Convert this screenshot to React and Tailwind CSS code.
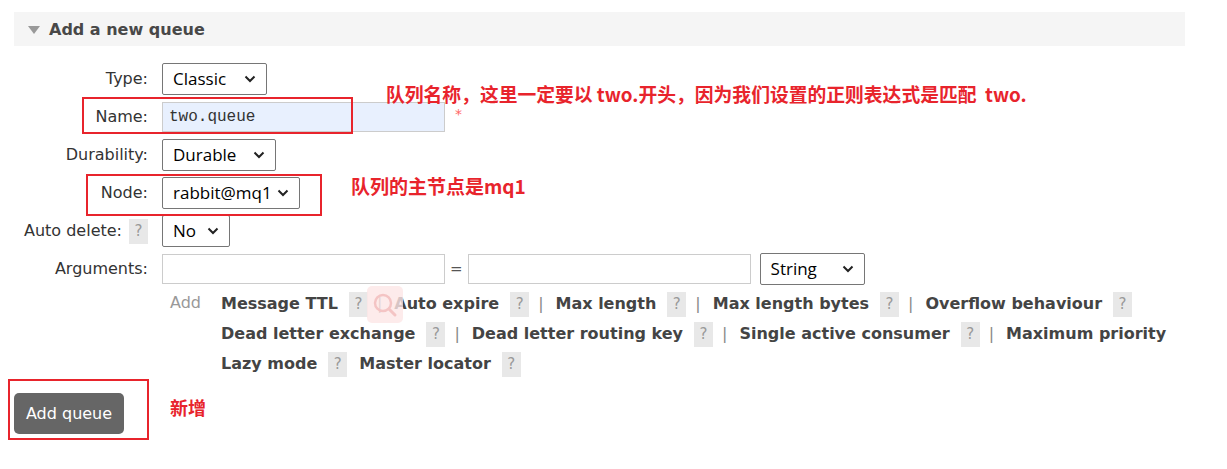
import { useState } from "react";

const Help = ({ className = "" }) => (
  <span
    className={
      "inline-flex items-center justify-center w-[19px] h-[25px] bg-[#e8e8e8] text-[#999] text-[15px] font-normal " +
      className
    }
  >
    ?
  </span>
);

const Chevron = () => (
  <svg width="12" height="8" viewBox="0 0 12 8" className="ml-auto">
    <path d="M1.5 1.5 L6 6 L10.5 1.5" fill="none" stroke="#222" strokeWidth="2" />
  </svg>
);

const Select = ({ value, width }) => (
  <div
    className={
      "flex items-center h-[32px] px-[10px] border border-[#767676] rounded-[2px] bg-white text-[17px] text-black font-['Open_Sans',sans-serif] " +
      width
    }
  >
    <span>{value}</span>
    <Chevron />
  </div>
);

const Row = ({ label, help, children }) => (
  <div className="flex items-center h-[38px]">
    <div className="w-[148px] flex items-center justify-end gap-[7px] text-[16px] text-[#333]">
      <span>{label}</span>
      {help && <Help />}
    </div>
    <div className="ml-[14px] flex items-center">{children}</div>
  </div>
);

const Arg = ({ name, last, help = true }) => (
  <span className="inline-flex items-center">
    <span className="font-bold text-[#444]">{name}</span>
    {help && <Help className="ml-[11px]" />}
    {!last && <span className="ml-[9px] mr-[12px] text-[#888] font-normal">|</span>}
  </span>
);

export default function App() {
  const [name] = useState("two.queue");

  return (
    <div className="relative w-[1227px] h-[469px] bg-white font-['DejaVu_Sans',Verdana,sans-serif] overflow-hidden">
      <div className="pt-[12px] pl-[14px]">
        {/* section header */}
        <div className="flex items-center w-[1171px] h-[34px] bg-[#f5f5f5] pl-[14px] pt-[2px]">
          <svg width="12" height="8" viewBox="0 0 12 8">
            <path d="M0 0 L12 0 L6 8 Z" fill="#999" />
          </svg>
          <span className="ml-[9px] text-[16px] font-bold text-[#484848]">Add a new queue</span>
        </div>

        <div className="mt-[14px] -ml-[14px] flex flex-col">
          <Row label="Type:">
            <Select value="Classic" width="w-[105px]" />
          </Row>
          <Row label="Name:">
            <div className="w-[283px] h-[30px] bg-[#e8f0fe] border border-[#ccc] flex items-center px-[6px] font-['Liberation_Mono',monospace] text-[16px] text-[#333]">
              {name}
            </div>
            <span className="ml-[10px] text-[#f66] text-[14px] self-start mt-[2px]">*</span>
          </Row>
          <Row label="Durability:">
            <Select value="Durable" width="w-[114px]" />
          </Row>
          <Row label="Node:">
            <Select value="rabbit@mq1" width="w-[138px]" />
          </Row>
          <Row label="Auto delete:" help>
            <Select value="No" width="w-[68px]" />
          </Row>
          <Row label="Arguments:">
            <div className="w-[283px] h-[30px] border border-[#ccc] bg-white" />
            <span className="mx-[5px] text-[#555] text-[15px]">=</span>
            <div className="w-[283px] h-[30px] border border-[#ccc] bg-white" />
            <div className="ml-[9px]">
              <Select value="String" width="w-[105px]" />
            </div>
          </Row>
        </div>

        {/* argument shortcuts */}
        <div className="flex mt-[1px] ml-[156px]">
          <span className="text-[16px] text-[#999] w-[51px] leading-[28px]">Add</span>
          <div className="flex flex-col text-[16px]">
            <div className="flex items-center h-[30px]">
              <Arg name="Message TTL" />
              <Arg name="Auto expire" />
              <Arg name="Max length" />
              <Arg name="Max length bytes" />
              <Arg name="Overflow behaviour" last />
            </div>
            <div className="flex items-center h-[30px]">
              <Arg name="Dead letter exchange" />
              <Arg name="Dead letter routing key" />
              <Arg name="Single active consumer" />
              <Arg name="Maximum priority" last help={false} />
            </div>
            <div className="flex items-center h-[30px] gap-[12px]">
              <span className="inline-flex items-center">
                <span className="font-bold text-[#444]">Lazy mode</span>
                <Help className="ml-[11px]" />
              </span>
              <span className="inline-flex items-center">
                <span className="font-bold text-[#444]">Master locator</span>
                <Help className="ml-[11px]" />
              </span>
            </div>
          </div>
        </div>

        <div className="flex items-center mt-[14px]">
          <button className="w-[110px] h-[41px] rounded-[5px] bg-[#666] text-white text-[16px]">
            Add queue
          </button>
          <span className="ml-[46px] mt-[-12px] text-[18px] font-bold text-[#e8242c] font-['Noto_Sans_CJK_SC',sans-serif]">
            新增
          </span>
        </div>
      </div>

      {/* faded overlay icon */}
      <div className="absolute left-[367px] top-[286px] w-[36px] h-[37px] rounded-[5px] bg-[#fde6e6]/80 flex items-center justify-center">
        <svg width="26" height="26" viewBox="0 0 26 26">
          <circle cx="11" cy="11" r="8" fill="none" stroke="#f4c4c4" strokeWidth="2.5" />
          <path d="M17 17 L23 23" stroke="#f4c4c4" strokeWidth="3" strokeLinecap="round" />
        </svg>
      </div>

      {/* annotations */}
      <div className="absolute left-[82px] top-[97px] w-[271px] h-[37px] border-2 border-[#e8242c]" />
      <div className="absolute left-[86px] top-[174px] w-[236px] h-[42px] border-2 border-[#e8242c]" />
      <div className="absolute left-[8px] top-[379px] w-[141px] h-[61px] border-2 border-[#e8242c]" />
      <div className="absolute left-[386px] top-[80px] text-[18.8px] font-bold text-[#e8242c] font-['Noto_Sans_CJK_SC',sans-serif] whitespace-pre">
        队列名称，这里一定要以 two.开头，因为我们设置的正则表达式是匹配  two.
      </div>
      <div className="absolute left-[351px] top-[172px] text-[19px] font-bold text-[#e8242c] font-['Noto_Sans_CJK_SC',sans-serif]">
        队列的主节点是mq1
      </div>
    </div>
  );
}
